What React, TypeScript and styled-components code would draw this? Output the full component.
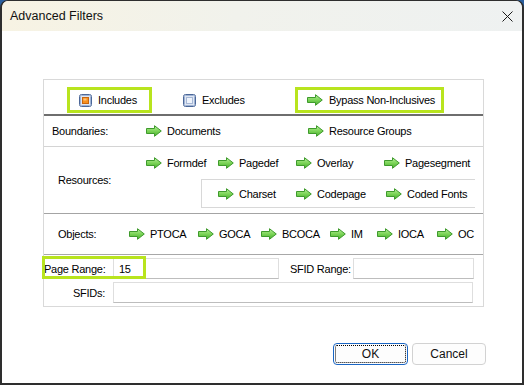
import styled, { createGlobalStyle } from 'styled-components';

const GlobalStyle = createGlobalStyle`
  html, body {
    margin: 0;
    padding: 0;
    background: #2a5f9e;
  }
  body {
    font-family: 'Liberation Sans', Arial, sans-serif;
  }
`;

const Window = styled.div`
  width: 524px;
  height: 385px;
  box-sizing: border-box;
  background: #fff;
  border-style: solid;
  border-color: #2e2e2e;
  border-width: 1px 2px 2px 2px;
  border-radius: 8px 8px 0 0;
  overflow: hidden;
  display: flex;
  flex-direction: column;
`;

const TitleBar = styled.div`
  height: 30px;
  flex-shrink: 0;
  display: flex;
  align-items: center;
  justify-content: space-between;
  padding-left: 8px;
  background: linear-gradient(90deg, #f7f3e3 0%, #f1f2ec 45%, #eef1f1 100%);
  font-size: 12.5px;
  color: #111;
`;

const CloseButton = styled.div`
  width: 30px;
  height: 30px;
  display: flex;
  align-items: center;
  justify-content: center;
`;

const Body = styled.div`
  flex: 1;
  display: flex;
  flex-direction: column;
  padding: 48px 0 0 41px;
`;

const Panel = styled.div`
  width: 441px;
  box-sizing: border-box;
  border: 1px solid #d9d9d9;
  font-size: 11px;
  letter-spacing: -0.25px;
  color: #000;
  white-space: nowrap;
`;

const HeaderRow = styled.div`
  height: 36px;
  display: flex;
  align-items: flex-start;
  gap: 19px;
  padding: 7px 0 0 23px;
  box-sizing: border-box;
  border-bottom: 2px solid #6e6e6e;
`;

const HighlightBox = styled.div<{ $on?: boolean; $w: number }>`
  width: ${(p) => p.$w}px;
  height: 26px;
  box-sizing: border-box;
  border: 3px solid ${(p) => (p.$on ? '#b8e41e' : 'transparent')};
  display: flex;
  align-items: center;
  gap: 6px;
  padding-left: 9px;
`;

const Section = styled.div<{ $h: number; $line: string }>`
  height: ${(p) => p.$h}px;
  display: flex;
  align-items: center;
  border-bottom: 1px solid ${(p) => p.$line};
`;

const RowLabel = styled.div<{ $w: number; $pl: number }>`
  width: ${(p) => p.$w}px;
  padding-left: ${(p) => p.$pl}px;
  box-sizing: border-box;
  flex-shrink: 0;
`;

const ItemColumn = styled.div`
  display: flex;
  flex-direction: column;
  align-self: stretch;
`;

const ItemRow = styled.div<{ $h: number }>`
  height: ${(p) => p.$h}px;
  display: flex;
  align-items: center;
`;

const SubBox = styled.div`
  margin-left: 55px;
  width: 274px;
  height: 29px;
  box-sizing: border-box;
  border: 1px solid #d8d8d8;
  border-right: none;
  display: flex;
  align-items: center;
  padding-left: 16px;
`;

const ArrowItem = styled.div<{ $w?: number }>`
  width: ${(p) => (p.$w ? `${p.$w}px` : 'auto')};
  flex-shrink: 0;
  display: flex;
  align-items: center;
  gap: 5px;
`;

const Fields = styled.div`
  position: relative;
  display: flex;
  flex-direction: column;
  gap: 3px;
  padding: 3px 0 3px;
`;

const FieldRow = styled.div`
  display: flex;
  align-items: center;
`;

const FieldLabel = styled.div<{ $w: number; $align?: string; $ml?: number }>`
  width: ${(p) => p.$w}px;
  margin-left: ${(p) => p.$ml ?? 0}px;
  text-align: ${(p) => p.$align ?? 'right'};
  padding-right: ${(p) => (p.$align === 'left' ? 0 : 8)}px;
  box-sizing: border-box;
  flex-shrink: 0;
`;

const TextBox = styled.div<{ $w: number }>`
  width: ${(p) => p.$w}px;
  height: 21px;
  box-sizing: border-box;
  border: 1px solid #dedede;
  border-bottom-color: #bdbdbd;
  background: #fff;
  display: flex;
  align-items: center;
  padding-left: 5px;
`;

const FieldHighlight = styled.div`
  position: absolute;
  left: -2px;
  top: 1px;
  width: 104px;
  height: 23px;
  box-sizing: border-box;
  border: 3px solid #b8e41e;
  pointer-events: none;
`;

const Footer = styled.div`
  display: flex;
  justify-content: flex-end;
  gap: 4px;
  margin-top: 36px;
  padding-right: 36px;
`;

const DialogButton = styled.div<{ $primary?: boolean; $w: number }>`
  width: ${(p) => p.$w}px;
  height: 22px;
  box-sizing: border-box;
  border-radius: 4px;
  border: 1px solid ${(p) => (p.$primary ? '#1b66c4' : '#d2d2d2')};
  background: #fdfdfd;
  display: flex;
  align-items: center;
  justify-content: center;
  font-size: 12px;
  color: #111;
  outline: ${(p) => (p.$primary ? '1px dotted #000' : 'none')};
  outline-offset: -3px;
`;

function Arrow() {
  return (
    <svg width="16" height="12" viewBox="0 0 16 12">
      <defs>
        <linearGradient id="ag" x1="0" y1="0" x2="0" y2="1">
          <stop offset="0" stopColor="#b8f09a" />
          <stop offset="0.5" stopColor="#7cd458" />
          <stop offset="1" stopColor="#45ad2a" />
        </linearGradient>
      </defs>
      <path
        d="M0.5 3.5 H8.5 V0.7 L15.3 6 L8.5 11.3 V8.5 H0.5 Z"
        fill="url(#ag)"
        stroke="#3e9a2c"
        strokeWidth="1"
        strokeLinejoin="round"
      />
    </svg>
  );
}

function Check({ on }: { on?: boolean }) {
  return (
    <svg width="13" height="13" viewBox="0 0 13 13">
      <rect x="0.5" y="0.5" width="12" height="12" rx="2" fill="#dfe6f2" stroke="#4b6798" />
      <rect x="1.5" y="1.5" width="10" height="10" rx="1" fill="none" stroke="#9fb3d4" />
      {on ? (
        <>
          <rect x="3.5" y="3.5" width="6" height="6" fill="#f7901e" stroke="#c9650e" />
          <rect x="4.5" y="4.5" width="3" height="2" fill="#ffc277" />
        </>
      ) : (
        <rect x="3.5" y="3.5" width="6" height="6" fill="#eef3fb" stroke="#a7b8d6" />
      )}
    </svg>
  );
}

function Item({ label, w }: { label: string; w?: number }) {
  return (
    <ArrowItem $w={w}>
      <Arrow />
      <span>{label}</span>
    </ArrowItem>
  );
}

export default function App() {
  return (
    <>
      <GlobalStyle />
      <Window>
        <TitleBar>
          <span>Advanced Filters</span>
          <CloseButton>
            <svg width="11" height="11" viewBox="0 0 11 11">
              <path d="M0.5 0.5 L10.5 10.5 M10.5 0.5 L0.5 10.5" stroke="#1a1a1a" strokeWidth="1" />
            </svg>
          </CloseButton>
        </TitleBar>
        <Body>
          <Panel>
            <HeaderRow>
              <HighlightBox $on $w={85}>
                <Check on />
                <span>Includes</span>
              </HighlightBox>
              <HighlightBox $w={105}>
                <Check />
                <span>Excludes</span>
              </HighlightBox>
              <HighlightBox $on $w={149}>
                <Arrow />
                <span>Bypass Non-Inclusives</span>
              </HighlightBox>
            </HeaderRow>

            <Section $h={30} $line="#d4d4d4">
              <RowLabel $w={102} $pl={8}>Boundaries:</RowLabel>
              <Item label="Documents" w={162} />
              <Item label="Resource Groups" />
            </Section>

            <Section $h={66} $line="#a4a4a4">
              <RowLabel $w={102} $pl={14}>Resources:</RowLabel>
              <ItemColumn>
                <ItemRow $h={32}>
                  <Item label="Formdef" w={72} />
                  <Item label="Pagedef" w={78} />
                  <Item label="Overlay" w={88} />
                  <Item label="Pagesegment" />
                </ItemRow>
                <SubBox>
                  <Item label="Charset" w={78} />
                  <Item label="Codepage" w={90} />
                  <Item label="Coded Fonts" />
                </SubBox>
              </ItemColumn>
            </Section>

            <Section $h={40} $line="#a8a8a8">
              <RowLabel $w={85} $pl={14}>Objects:</RowLabel>
              <Item label="PTOCA" w={69} />
              <Item label="GOCA" w={63} />
              <Item label="BCOCA" w={69} />
              <Item label="IM" w={47} />
              <Item label="IOCA" w={60} />
              <Item label="OC" />
            </Section>

            <Fields>
              <FieldRow>
                <FieldLabel $w={69}>Page Range:</FieldLabel>
                <TextBox $w={166}>15</TextBox>
                <FieldLabel $w={63} $ml={11} $align="left">SFID Range:</FieldLabel>
                <TextBox $w={121} />
              </FieldRow>
              <FieldRow>
                <FieldLabel $w={69}>SFIDs:</FieldLabel>
                <TextBox $w={360} />
              </FieldRow>
              <FieldHighlight />
            </Fields>
          </Panel>

          <Footer>
            <DialogButton $primary $w={75}>OK</DialogButton>
            <DialogButton $w={74}>Cancel</DialogButton>
          </Footer>
        </Body>
      </Window>
    </>
  );
}
